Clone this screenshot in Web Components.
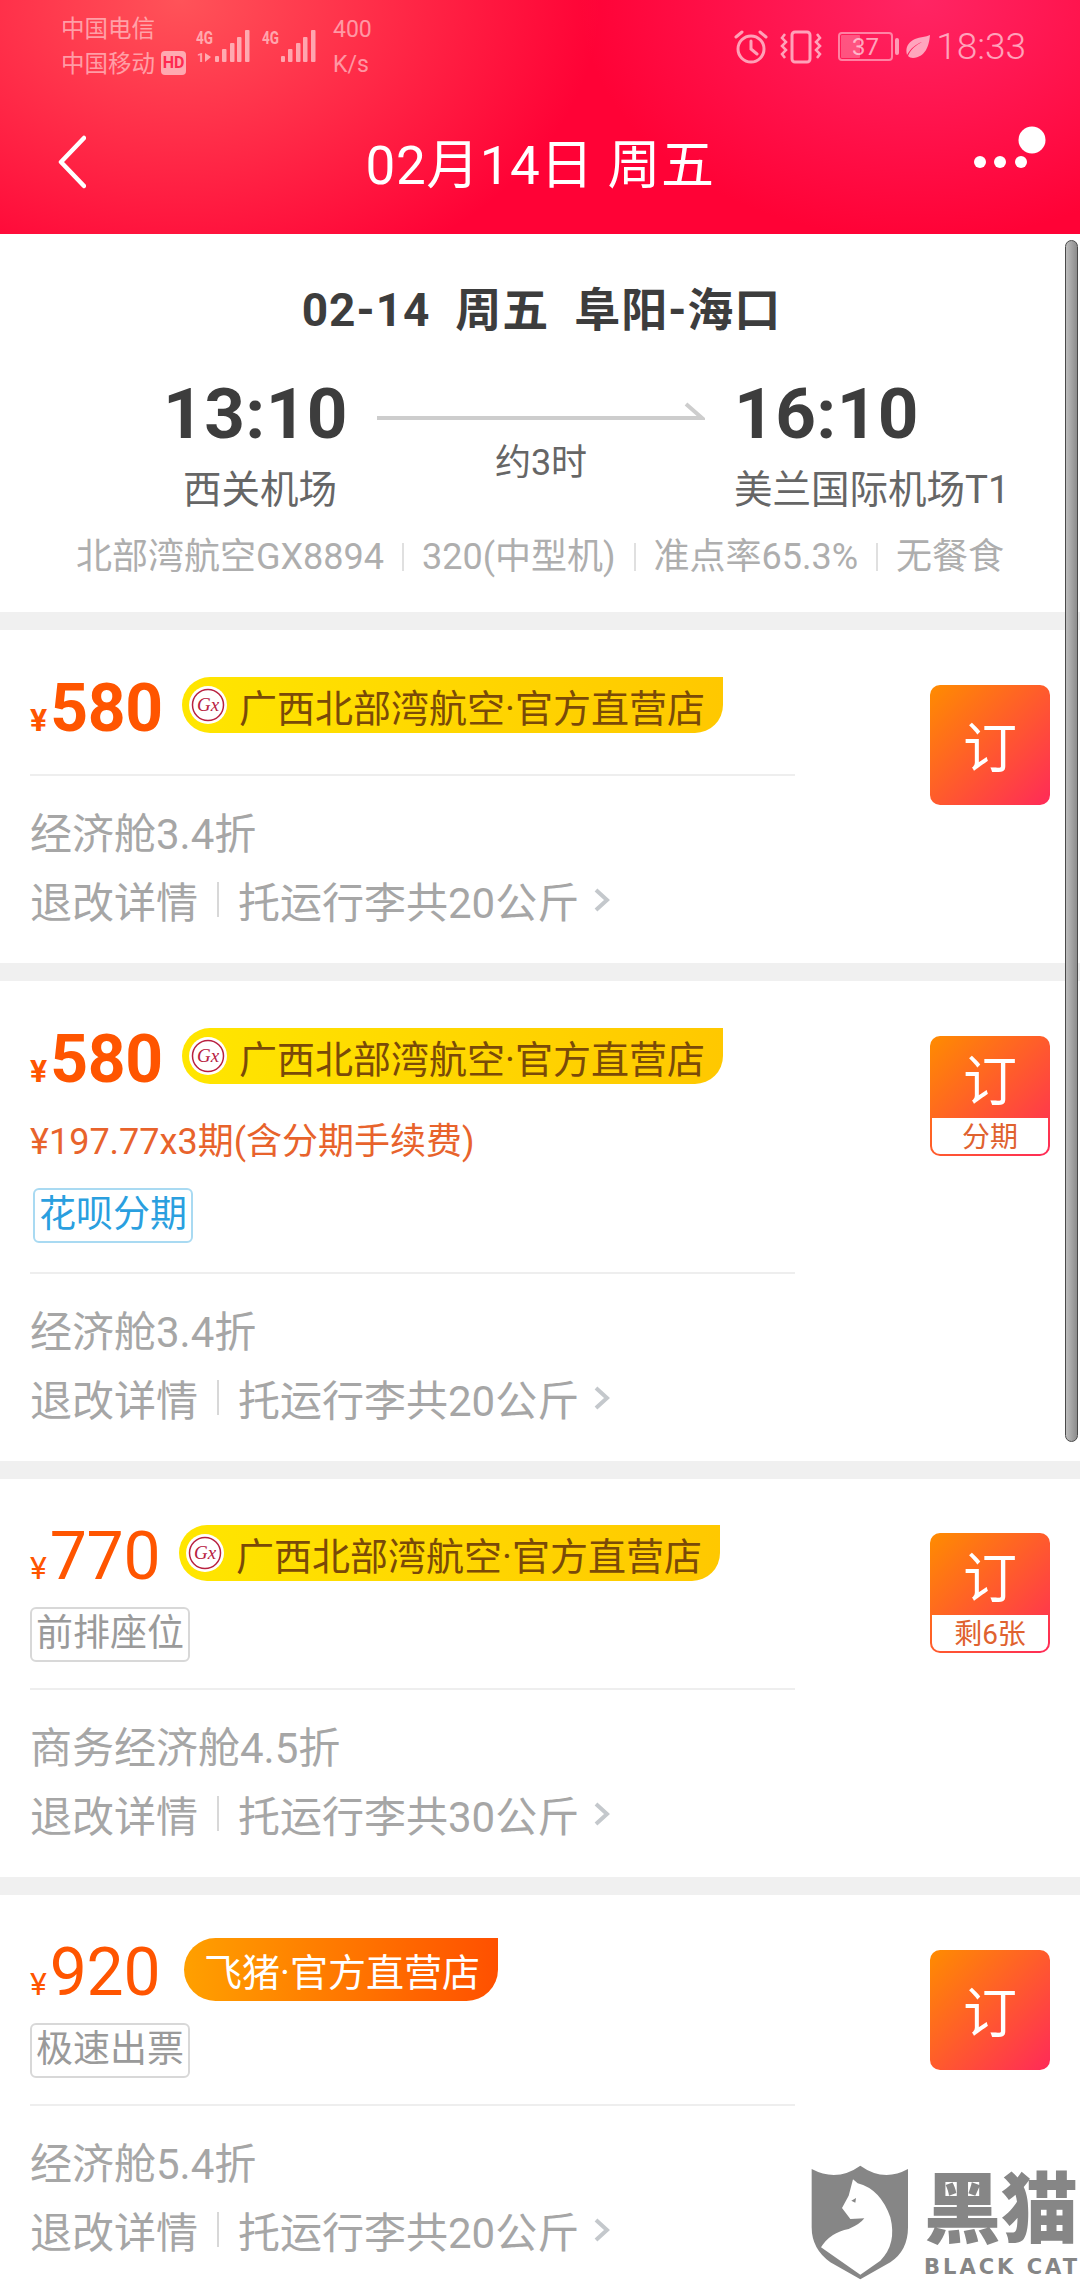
<!DOCTYPE html>
<html lang="zh">
<head>
<meta charset="utf-8">
<title>航班详情</title>
<style>
  html, body { margin: 0; padding: 0; }
  body {
    position: relative;
    width: 1080px;
    height: 2280px;
    overflow: hidden;
    background: #f0f0f0;
    font-family: Roboto, "Noto Sans CJK SC", sans-serif;
  }
</style>
</head>
<body>
  <app-header></app-header>
  <flight-summary></flight-summary>

  <fare-card price="580" bold cabin="经济舱3.4折" baggage="托运行李共20公斤" style="--head-gap: 41px; --btn-top: 55px; --card-gap: 18px;">
    <shop-tag>广西北部湾航空·官方直营店</shop-tag>
  </fare-card>

  <fare-card price="580" bold cabin="经济舱3.4折" baggage="托运行李共20公斤" note="分期" style="--head-gap: 29px; --btn-top: 55px; --card-gap: 18px;">
    <shop-tag>广西北部湾航空·官方直营店</shop-tag>
    <div slot="extra" style="margin-top: 36px; height: 44px; line-height: 44px; font-size: 36px; color: #e8632c;">¥197.77x3期(含分期手续费)</div>
    <service-tag slot="extra" tone="blue" style="margin: 24px 0 0 3px;">花呗分期</service-tag>
  </fare-card>

  <fare-card price="770" cabin="商务经济舱4.5折" baggage="托运行李共30公斤" note="剩6张" style="--head-top: 46px; --head-gap: 26px; --btn-top: 54px; --card-gap: 18px; --tag-left: 18px;">
    <shop-tag>广西北部湾航空·官方直营店</shop-tag>
    <service-tag slot="extra" style="margin: 26px 0 0 0;">前排座位</service-tag>
  </fare-card>

  <fare-card price="920" cabin="经济舱5.4折" baggage="托运行李共20公斤" style="--head-top: 43px; --head-gap: 26px; --btn-top: 55px; --tag-left: 23px; --row-height: 63px;">
    <shop-tag kind="fliggy">飞猪·官方直营店</shop-tag>
    <service-tag slot="extra" style="margin: 22px 0 0 0;">极速出票</service-tag>
  </fare-card>

  <scroll-thumb></scroll-thumb>
  <black-cat-mark></black-cat-mark>

<script>
const signalBars = /* html */`
  <rect x="19" y="27" width="4" height="6" rx="1"/>
  <rect x="26" y="20" width="4.5" height="13" rx="1"/>
  <rect x="34" y="14" width="4.5" height="19" rx="1"/>
  <rect x="41" y="8" width="4.5" height="25" rx="1"/>
  <rect x="49" y="1" width="4.5" height="32" rx="1"/>
`;

const headerTemplate = document.createElement('template');

headerTemplate.innerHTML = /* html */`
  <style>
    :host {
      display: block;
      height: 234px;
      color: #fff;
      background:
        radial-gradient(420px 300px at 180px 0, rgba(255, 110, 100, .75), rgba(255, 110, 100, 0) 100%),
        radial-gradient(340px 240px at 920px 0, rgba(255, 60, 130, .6), rgba(255, 60, 130, 0) 100%),
        #ff0236;
    }
    .status {
      display: flex;
      justify-content: space-between;
      align-items: center;
      box-sizing: border-box;
      height: 90px;
      padding: 3px 54px 0 61px;
      color: rgba(255, 255, 255, .5);
    }
    .group { display: flex; align-items: center; }
    .carriers { font-size: 23.5px; line-height: 35px; width: 135px; position: relative; }
    .carriers div { white-space: nowrap; }
    .hd {
      position: absolute;
      left: 100px;
      top: 39px;
      width: 25px;
      height: 24px;
      border-radius: 4px;
      background: rgba(255, 255, 255, .55);
      color: #ff2a50;
      font-size: 16px;
      font-weight: 700;
      line-height: 24px;
      text-align: center;
    }
    .speed { font-size: 23px; line-height: 35px; margin-left: 17px; }
    .time { font-size: 37px; font-weight: 300; margin-left: 6px; color: rgba(255, 255, 255, .6); }
    .status svg { display: block; flex: none; }
    .nav {
      display: flex;
      align-items: center;
      justify-content: space-between;
      height: 144px;
      padding: 0 30px 0 58px;
      position: relative;
    }
    .title {
      position: absolute;
      left: 0;
      right: 0;
      top: 41px;
      text-align: center;
      font-size: 53px;
      letter-spacing: .5px;
      line-height: 70px;
    }
    .nav svg { display: block; position: relative; }
  </style>
  <div class="status">
    <div class="group">
      <div class="carriers">
        <div>中国电信</div>
        <div>中国移动</div>
        <span class="hd">HD</span>
      </div>
      <svg width="54" height="44" viewBox="0 -4 54 44" fill="rgba(255,255,255,.55)">
        <text x="0" y="15" font-family="Roboto, sans-serif" font-weight="700" font-size="18" textLength="17" lengthAdjust="spacingAndGlyphs">4G</text>
        <text x="1" y="33" font-family="Roboto, sans-serif" font-weight="700" font-size="13">1</text>
        <path d="M9 24v9l6-5z"/>
        ${signalBars}
      </svg>
      <svg width="54" height="44" viewBox="0 -4 54 44" fill="rgba(255,255,255,.55)" style="margin-left: 12px;">
        <text x="0" y="15" font-family="Roboto, sans-serif" font-weight="700" font-size="18" textLength="17" lengthAdjust="spacingAndGlyphs">4G</text>
        ${signalBars}
      </svg>
      <div class="speed"><div>400</div><div>K/s</div></div>
    </div>
    <div class="group">
      <svg width="34" height="34" viewBox="0 0 34 34" fill="none" stroke="rgba(255,255,255,.6)" stroke-width="3" stroke-linecap="round">
        <circle cx="17" cy="19" r="13"/>
        <path d="M17 11v8l6 5M2 7l6-5M32 7l-6-5"/>
      </svg>
      <svg width="42" height="34" viewBox="0 0 42 34" fill="none" stroke="rgba(255,255,255,.6)" stroke-width="3" style="margin-left: 12px;">
        <rect x="12" y="2" width="18" height="30" rx="3"/>
        <path d="M5 4l-3 4 4 4-4 4 4 4-4 4 3 4M37 4l3 4-4 4 4 4-4 4 4 4-3 4" stroke-width="2.5"/>
      </svg>
      <svg width="62" height="30" viewBox="0 0 62 30" style="margin-left: 16px;">
        <rect x="1" y="1" width="53" height="27" rx="3" fill="none" stroke="rgba(255,255,255,.45)" stroke-width="2"/>
        <rect x="3" y="3" width="19" height="23" rx="1" fill="rgba(255,255,255,.25)"/>
        <rect x="57" y="6" width="4" height="17" rx="2" fill="rgba(255,255,255,.55)"/>
        <text x="27.5" y="23" text-anchor="middle" font-family="Roboto, sans-serif" font-size="24" fill="rgba(255,255,255,.6)">37</text>
      </svg>
      <svg width="24" height="24" viewBox="0 0 24 24" fill="rgba(255,255,255,.6)" style="margin-left: 6px;">
        <path d="M24 0C23 12 19 22 7 23 5 23 3 22 2 21 5 14 10 10 16 7 10 9 5 13 1 20-1 13 2 7 9 4 14 2 20 2 24 0Z"/>
      </svg>
      <span class="time">18:33</span>
    </div>
  </div>
  <div class="nav">
    <svg width="28" height="54" viewBox="0 0 28 54" fill="none" stroke="#fff" stroke-width="4.5" stroke-linecap="round" stroke-linejoin="round">
      <path d="M26 3L3 27l23 24"/>
    </svg>
    <div class="title">02月14日 周五</div>
    <svg width="90" height="60" viewBox="0 0 90 60" fill="#fff" style="top: -7px;">
      <circle cx="20" cy="37" r="6"/>
      <circle cx="40" cy="37" r="6"/>
      <circle cx="61" cy="37" r="6"/>
      <circle cx="72" cy="15" r="13.5"/>
    </svg>
  </div>
`;

class AppHeader extends HTMLElement {
  constructor() {
    super();
    this.attachShadow({ mode: 'open' });
    this.shadowRoot.appendChild(headerTemplate.content.cloneNode(true));
  }
}

const summaryTemplate = document.createElement('template');

summaryTemplate.innerHTML = /* html */`
  <style>
    :host {
      display: block;
      height: 378px;
      margin-bottom: 18px;
      background: #fff;
      color: #3d3d3d;
    }
    .route {
      padding: 48px 0 0 3px;
      font-size: 46px;
      font-weight: 700;
      line-height: 56px;
      text-align: center;
      white-space: pre;
      letter-spacing: 1px;
    }
    .times {
      display: grid;
      grid-template-columns: 377px 328px 1fr;
      margin-top: 34px;
    }
    .dep { padding-left: 163px; }
    .arr { padding-left: 29px; }
    .clock { font-size: 71px; font-weight: 700; letter-spacing: .4px; line-height: 84px; }
    .airport { font-size: 38.5px; line-height: 48px; margin-top: 10px; color: #666; white-space: nowrap; }
    .dep .airport { margin-left: 20px; }
    .mid { text-align: center; }
    .mid svg { display: block; margin-top: 30px; }
    .mid div { font-size: 36px; line-height: 46px; margin-top: 14px; color: #666; }
    .info {
      display: flex;
      justify-content: center;
      align-items: center;
      gap: 18px;
      margin-top: 19px;
      font-size: 36px;
      line-height: 48px;
      color: #aeaeae;
    }
    .info i { width: 2px; height: 28px; background: #e0e0e0; }
  </style>
  <div class="route">02-14  周五  阜阳-海口</div>
  <div class="times">
    <div class="dep">
      <div class="clock">13:10</div>
      <div class="airport">西关机场</div>
    </div>
    <div class="mid">
      <svg width="328" height="24" viewBox="0 0 328 24" fill="none">
        <path d="M0 16H325L309 2" stroke="#cdcdcd" stroke-width="4"/>
      </svg>
      <div>约3时</div>
    </div>
    <div class="arr">
      <div class="clock">16:10</div>
      <div class="airport">美兰国际机场T1</div>
    </div>
  </div>
  <div class="info">
    <span>北部湾航空GX8894</span><i></i>
    <span>320(中型机)</span><i></i>
    <span>准点率65.3%</span><i></i>
    <span>无餐食</span>
  </div>
`;

class FlightSummary extends HTMLElement {
  constructor() {
    super();
    this.attachShadow({ mode: 'open' });
    this.shadowRoot.appendChild(summaryTemplate.content.cloneNode(true));
  }
}

const shopTagTemplate = document.createElement('template');

shopTagTemplate.innerHTML = /* html */`
  <style>
    :host {
      display: inline-flex;
      align-items: center;
      height: 56px;
      padding: 0 18px 0 7px;
      gap: 12px;
      border-radius: 28px 0 28px 28px;
      background: linear-gradient(90deg, #ffe600, #ffc800);
      color: #7a4a08;
      font-size: 38px;
      white-space: nowrap;
    }
    :host([kind="fliggy"]) {
      height: 63px;
      padding: 0 18px 0 20px;
      border-radius: 32px 0 32px 32px;
      background: linear-gradient(90deg, #ffa000, #ff5000);
      color: #fff;
    }
    :host([kind="fliggy"]) svg { display: none; }
    svg { display: block; flex: none; }
  </style>
  <svg width="38" height="38" viewBox="0 0 38 38">
    <circle cx="19" cy="19" r="19" fill="#fff"/>
    <circle cx="19" cy="19" r="15.5" fill="#fff" stroke="#b8213f" stroke-width="1.5"/>
    <text x="19" y="25" text-anchor="middle" font-family="Liberation Serif, serif" font-style="italic" font-size="19" fill="#b8213f">Gx</text>
  </svg>
  <slot></slot>
`;

class ShopTag extends HTMLElement {
  constructor() {
    super();
    this.attachShadow({ mode: 'open' });
    this.shadowRoot.appendChild(shopTagTemplate.content.cloneNode(true));
  }
}

const serviceTagTemplate = document.createElement('template');

serviceTagTemplate.innerHTML = /* html */`
  <style>
    :host {
      display: block;
      width: fit-content;
      box-sizing: border-box;
      height: 55px;
      padding: 0 4px;
      border: 2px solid #d8d8d8;
      border-radius: 6px;
      color: #9a9a9a;
      font-size: 37px;
      line-height: 50px;
      white-space: nowrap;
    }
    :host([tone="blue"]) {
      border-color: #a9daf2;
      color: #2a9fdf;
    }
  </style>
  <slot></slot>
`;

class ServiceTag extends HTMLElement {
  constructor() {
    super();
    this.attachShadow({ mode: 'open' });
    this.shadowRoot.appendChild(serviceTagTemplate.content.cloneNode(true));
  }
}

const bookTemplate = document.createElement('template');

bookTemplate.innerHTML = /* html */`
  <style>
    :host {
      display: block;
      box-sizing: border-box;
      width: 120px;
      height: 120px;
      border-radius: 10px;
      overflow: hidden;
      background: linear-gradient(135deg, #ff8c00, #ff2a58);
      color: #fff;
      text-align: center;
    }
    .go { font-size: 54px; line-height: 130px; }
    :host([note]) .go { line-height: 94px; height: 82px; }
    .note {
      display: none;
      position: relative;
      height: 36px;
      margin: 0 2px;
      border-radius: 0 0 8px 8px;
      background: #fff;
      color: #e0622f;
      font-size: 28px;
      line-height: 40px;
    }
    :host([note]) .note { display: block; }
  </style>
  <div class="go">订</div>
  <div class="note"></div>
`;

class BookButton extends HTMLElement {
  constructor() {
    super();
    this.attachShadow({ mode: 'open' });
    this.shadowRoot.appendChild(bookTemplate.content.cloneNode(true));
  }

  static get observedAttributes() {
    return ['note'];
  }

  attributeChangedCallback(name, oldValue, newValue) {
    this.shadowRoot.querySelector('.note').textContent = newValue || '';
  }
}

const fareTemplate = document.createElement('template');

fareTemplate.innerHTML = /* html */`
  <style>
    :host {
      display: block;
      margin-bottom: var(--card-gap, 0);
      background: #fff;
    }
    .wrap { display: flex; align-items: flex-start; padding: 0 30px; }
    .main { width: 765px; flex: none; }
    .head { padding-top: var(--head-top, 47px); padding-bottom: var(--head-gap, 26px); }
    .price-row { display: flex; align-items: center; height: var(--row-height, 56px); }
    .price { display: flex; align-items: baseline; color: #ff5500; width: 131px; flex: none; line-height: 56px; padding-top: 18px; box-sizing: border-box; }
    .yen { font-size: 32px; margin-right: 3px; }
    .num { font-size: 66px; letter-spacing: -.3px; }
    :host([bold]) .num, :host([bold]) .yen { font-weight: 700; }
    .shop { margin-left: var(--tag-left, 21px); display: flex; }
    hr { margin: 0; border: 0; height: 2px; background: #eeeeee; }
    .meta { padding: 20px 0 29px; color: #a6a6a6; font-size: 42px; }
    .row { display: flex; align-items: center; height: 69px; white-space: nowrap; }
    .sep { width: 2px; height: 35px; margin: 0 19px 0 19px; background: #d8d8d8; }
    .row svg { display: block; margin-left: 15px; }
    book-button { margin: var(--btn-top, 55px) 0 0 135px; }
  </style>
  <div class="wrap">
    <div class="main">
      <div class="head">
        <div class="price-row">
          <div class="price"><span class="yen">¥</span><span class="num"></span></div>
          <div class="shop"><slot></slot></div>
        </div>
        <slot name="extra"></slot>
      </div>
      <hr>
      <div class="meta">
        <div class="row cabin"></div>
        <div class="row">
          <span>退改详情</span><i class="sep"></i><span class="baggage"></span>
          <svg width="17" height="24" viewBox="0 0 17 24" fill="none" stroke="#c4c8cc" stroke-width="4">
            <path d="M2 2l11 10L2 22"/>
          </svg>
        </div>
      </div>
    </div>
    <book-button></book-button>
  </div>
`;

class FareCard extends HTMLElement {
  constructor() {
    super();
    this.attachShadow({ mode: 'open' });
    this.shadowRoot.appendChild(fareTemplate.content.cloneNode(true));
  }

  connectedCallback() {
    const root = this.shadowRoot;
    root.querySelector('.num').textContent = this.getAttribute('price');
    root.querySelector('.cabin').textContent = this.getAttribute('cabin');
    root.querySelector('.baggage').textContent = this.getAttribute('baggage');
    if (this.hasAttribute('note')) {
      root.querySelector('book-button').setAttribute('note', this.getAttribute('note'));
    }
  }
}

const thumbTemplate = document.createElement('template');

thumbTemplate.innerHTML = /* html */`
  <style>
    :host {
      display: block;
      position: absolute;
      left: 1065px;
      top: 240px;
      width: 13px;
      height: 1202px;
      box-sizing: border-box;
      border: 1px solid #4a4a4a;
      border-radius: 7px;
      background: linear-gradient(90deg, #bdbdbd, #8c8c8c);
    }
  </style>
`;

class ScrollThumb extends HTMLElement {
  constructor() {
    super();
    this.attachShadow({ mode: 'open' });
    this.shadowRoot.appendChild(thumbTemplate.content.cloneNode(true));
  }
}

const markTemplate = document.createElement('template');

markTemplate.innerHTML = /* html */`
  <style>
    :host {
      display: flex;
      position: absolute;
      left: 811px;
      top: 2165px;
      width: 269px;
      height: 115px;
      color: #868686;
    }
    svg { display: block; flex: none; }
    .words { margin-left: 15px; }
    .cn { font-size: 77px; font-weight: 900; line-height: 80px; margin-top: 6px; white-space: nowrap; }
    .en {
      font-family: "DejaVu Sans", sans-serif;
      font-size: 21px;
      font-weight: 700;
      letter-spacing: 3px;
      line-height: 24px;
      margin-top: 4px;
      white-space: nowrap;
    }
  </style>
  <svg width="98" height="115" viewBox="92 133 294 345">
    <path fill="#868686" d="M94 145Q170 185 240 135 310 185 383 145V320Q383 390 330 425L240 476 150 425Q94 385 94 320Z"/>
    <path fill="#fff" d="M218 176L232 188Q300 205 330 290 350 370 300 420L240 462 122 380Q150 335 205 325 240 310 252 293L210 295 185 262 205 225Z"/>
    <path fill="#868686" d="M213 240l14-8-2 14z"/>
  </svg>
  <div class="words">
    <div class="cn">黑猫</div>
    <div class="en">BLACK CAT</div>
  </div>
`;

class BlackCatMark extends HTMLElement {
  constructor() {
    super();
    this.attachShadow({ mode: 'open' });
    this.shadowRoot.appendChild(markTemplate.content.cloneNode(true));
  }
}

customElements.define('app-header', AppHeader);
customElements.define('flight-summary', FlightSummary);
customElements.define('shop-tag', ShopTag);
customElements.define('service-tag', ServiceTag);
customElements.define('book-button', BookButton);
customElements.define('fare-card', FareCard);
customElements.define('scroll-thumb', ScrollThumb);
customElements.define('black-cat-mark', BlackCatMark);
</script>
</body>
</html>
